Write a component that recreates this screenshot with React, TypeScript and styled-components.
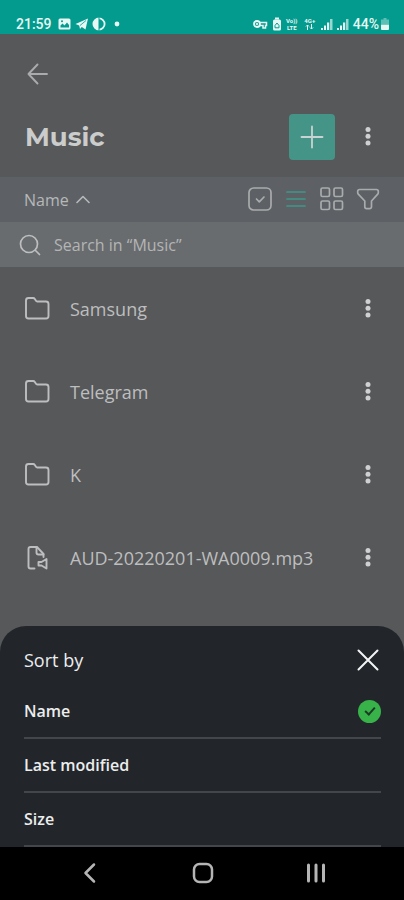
import React, { useState } from "react";
import styled, { createGlobalStyle } from "styled-components";

const GlobalStyle = createGlobalStyle`
  *, *::before, *::after { box-sizing: border-box; }
  body { margin: 0; background: #57585a; }
  button, input { font: inherit; color: inherit; }
`;

const Screen = styled.div`
  display: flex;
  flex-direction: column;
  min-height: 100vh;
  background: #57585a;
  color: #bdbebf;
  font-family: "Open Sans", "Noto Sans", sans-serif;
`;

const StatusBar = styled.div`
  display: flex;
  justify-content: space-between;
  align-items: center;
  height: 34px;
  padding: 13px 15px 0 16px;
  background: #029b8e;
  color: #e6f7f4;
  font-family: Roboto, sans-serif;
  font-size: 14px;
  font-weight: 500;
  line-height: 20px;
`;

const StatusGroup = styled.div<{ $gap: number }>`
  display: flex;
  align-items: center;
  gap: ${(p) => p.$gap}px;
`;

const StackedLabel = styled.span`
  display: grid;
  width: 14px;
  font-size: 6px;
  font-weight: 700;
  line-height: 7px;
  justify-items: center;
`;

const Main = styled.main`
  flex: 1;
`;

const IconButton = styled.button<{ $tone?: string }>`
  display: grid;
  place-items: center;
  width: 24px;
  height: 24px;
  padding: 0;
  border: 0;
  background: none;
  color: ${(p) => p.$tone ?? "#a9abac"};
  cursor: pointer;
`;

const BackRow = styled.div`
  display: flex;
  align-items: center;
  height: 80px;
  padding: 0 25px;
`;

const TitleRow = styled.header`
  display: flex;
  align-items: center;
  padding: 0 24px 17px 25px;
`;

const Title = styled.h1`
  flex: 1;
  margin: 0;
  color: #cbcccc;
  font-family: Montserrat, Inter, sans-serif;
  font-size: 26px;
  font-weight: 700;
  line-height: 36px;
`;

const AddButton = styled.button`
  display: grid;
  place-items: center;
  width: 46px;
  height: 46px;
  margin-right: 21px;
  padding: 0;
  border: 0;
  border-radius: 4px;
  background: #459488;
  color: #c9d3d1;
`;

const Toolbar = styled.div`
  display: flex;
  align-items: center;
  justify-content: space-between;
  height: 45px;
  padding: 0 24px 2px;
  background: #5d6165;
`;

const SortButton = styled.button`
  display: flex;
  align-items: center;
  gap: 7px;
  padding: 2px 0 0;
  border: 0;
  background: none;
  color: #b6b8ba;
  font-size: 16px;
  line-height: 24px;
`;

const ToolGroup = styled.div`
  display: flex;
  gap: 12px;
`;

const SearchBox = styled.label`
  display: flex;
  align-items: center;
  gap: 12px;
  height: 45px;
  padding: 0 18px;
  background: #696c6e;
`;

const SearchInput = styled.input`
  flex: 1;
  min-width: 0;
  padding: 0;
  border: 0;
  outline: 0;
  background: none;
  font-size: 16px;
  line-height: 24px;
  &::placeholder {
    color: #b3b5b6;
    opacity: 1;
  }
`;

const FileList = styled.ul`
  margin: 0;
  padding: 0;
  list-style: none;
`;

const FileRow = styled.li`
  display: flex;
  align-items: center;
  height: 83px;
  padding: 0 24px;
`;

const FileName = styled.span`
  flex: 1;
  margin-left: 20px;
  font-size: 18px;
  line-height: 26px;
`;

const Sheet = styled.section`
  padding: 0 23px 0 24px;
  border-radius: 26px 26px 0 0;
  background: #22262b;
  color: #eceded;
`;

const SheetHeader = styled.div`
  display: flex;
  align-items: center;
  justify-content: space-between;
  height: 59px;
  padding-top: 9px;
`;

const SheetTitle = styled.h2`
  margin: 0;
  font-size: 18px;
  font-weight: 400;
  line-height: 26px;
`;

const CloseButton = styled(IconButton)`
  width: 26px;
`;

const SortOption = styled.label`
  display: flex;
  align-items: center;
  justify-content: space-between;
  height: 54px;
  border-bottom: 2px solid #43474b;
  font-size: 16px;
  font-weight: 600;
  line-height: 24px;
  cursor: pointer;
`;

const SortRadio = styled.input`
  display: grid;
  place-items: center;
  appearance: none;
  width: 23px;
  height: 23px;
  margin: 0;
  border-radius: 50%;
  &:checked {
    background: #37b34a;
  }
  &:checked::after {
    content: "";
    width: 6px;
    height: 10px;
    margin-bottom: 3px;
    border: solid #1d3a26;
    border-width: 0 2px 2px 0;
    transform: rotate(42deg);
  }
`;

const NavBar = styled.nav`
  display: flex;
  height: 53px;
  padding: 0 32px 2px 34px;
  background: #000;
`;

const NavButton = styled.button`
  display: grid;
  flex: 1;
  place-items: center;
  padding: 0;
  border: 0;
  background: none;
  color: #b5b5b5;
`;

type IconProps = { size?: number; w?: number; children: React.ReactNode };
const LineIcon = ({ size = 24, w = 2, children }: IconProps) => (
  <svg width={size} height={size} viewBox={`0 0 ${size} ${size}`} fill="none" stroke="currentColor"
    strokeWidth={w} strokeLinecap="round" strokeLinejoin="round" aria-hidden="true">
    {children}
  </svg>
);

const Dots = () => (
  <svg width="24" height="24" viewBox="0 0 24 24" fill="#cfd0d0" aria-hidden="true">
    <circle cx="12" cy="4.500" r="2.500" />
    <circle cx="12" cy="11.200" r="2.500" />
    <circle cx="12" cy="17.900" r="2.500" />
  </svg>
);

const FolderIcon = () => (
  <LineIcon size={26} w={1.9}>
    <path d="M2 20V4.500A2.500 2.500 0 0 1 4.500 2h4.600a2 2 0 0 1 1.700.9l1.200 1.900a1.500 1.500 0 0 0 1.300.7H22A2.500 2.500 0 0 1 24.500 8v12a2.500 2.500 0 0 1-2.500 2.500H4.500A2.500 2.500 0 0 1 2 20z" />
  </LineIcon>
);

const AudioFileIcon = () => (
  <LineIcon size={26} w={1.9}>
    <path d="M10.500 23.500H6.500a2 2 0 0 1-2-2V4a2 2 0 0 1 2-2H13l6.500 7v3" />
    <path d="M12.500 2.500v5a2 2 0 0 0 2 2h5" />
    <path d="M14.500 17h3l5-3v9.500l-5-3h-3z" />
  </LineIcon>
);

const Signal = ({ level }: { level: number }) => (
  <svg width="12" height="12" viewBox="0 0 12 12" fill="currentColor" aria-hidden="true">
    <rect x="0" y="10" width="2" height="2" />
    <rect x="3" y="7.500" width="2" height="4.500" />
    <rect x="6" y="4.500" width="2.200" height="7.500" />
    <rect x="9" y="1" width="2.500" height="11" opacity={level} />
  </svg>
);

const files = [
  { name: "Samsung", audio: false },
  { name: "Telegram", audio: false },
  { name: "K", audio: false },
  { name: "AUD-20220201-WA0009.mp3", audio: true },
];

const sortOptions = ["Name", "Last modified", "Size"];

export default function App() {
  const [sort, setSort] = useState("Name");
  return (
    <Screen>
      <GlobalStyle />
      <StatusBar>
        <StatusGroup $gap={5}>
          <span>21:59</span>
          <svg width="64" height="14" viewBox="0 0 64 14" fill="currentColor" aria-hidden="true">
            <rect x="1.500" y="1.500" width="12" height="11" rx="1.500" />
            <path d="M3.500 10.500V8.500l2-2 2 2 2.500-3 2 2.500v2.500z" fill="#029b8e" />
            <circle cx="5" cy="4.300" r="1" fill="#029b8e" />
            <path d="M31 1.500 28.500 12.500l-3.700-2.500-1.800 2-.8-3.500L18.500 7z" />
            <path d="m29 3.500-6 5" stroke="#029b8e" strokeWidth=".8" />
            <circle cx="42" cy="7" r="5.600" fill="none" stroke="currentColor" strokeWidth="1.800" />
            <path d="M42 1.400a5.600 5.600 0 0 0 0 11.200z" />
            <path d="M42 0v14" stroke="#029b8e" strokeWidth="1" />
            <circle cx="60" cy="7" r="2.400" />
          </svg>
        </StatusGroup>
        <StatusGroup $gap={4}>
          <svg width="28" height="14" viewBox="0 0 28 14" fill="none" stroke="currentColor" aria-hidden="true">
            <circle cx="4" cy="7" r="3" strokeWidth="1.800" />
            <circle cx="4" cy="7" r=".8" fill="currentColor" />
            <path d="M7 5.500h6.500v3h-1V11h-2.500V8.500H7" strokeWidth="1.500" />
            <rect x="20" y="2.500" width="8" height="11" rx="1.500" fill="currentColor" stroke="none" />
            <path d="M22 1.500h4" strokeWidth="2" />
            <path d="m22 8.500 2-2.500 2 2.500v2.300h-4z" stroke="#029b8e" />
          </svg>
          <StackedLabel><span>Vo))</span><span>LTE</span></StackedLabel>
          <StackedLabel>
            <span>4G+</span>
            <svg width="9" height="6" viewBox="0 0 9 6" fill="none" stroke="currentColor" aria-hidden="true">
              <path d="M2.500 6V1M1 2.500 2.500 1 4 2.500M6.500 0v5M5 3.500 6.500 5 8 3.500" />
            </svg>
          </StackedLabel>
          <Signal level={0.65} />
          <Signal level={0.65} />
          <StatusGroup $gap={2}>
            <span>44%</span>
            <svg width="8" height="12" viewBox="0 0 8 12" fill="currentColor" aria-hidden="true">
              <path d="M2.500 0h3v1.500H8V6H0V1.500h2.500z" opacity=".4" />
              <path d="M0 6.500h8V11a1 1 0 0 1-1 1H1a1 1 0 0 1-1-1z" />
            </svg>
          </StatusGroup>
        </StatusGroup>
      </StatusBar>

      <Main>
        <BackRow>
          <IconButton aria-label="Back">
            <LineIcon w={1.900}><path d="M22 12H3.500M12.500 2.500 3.500 12l9 9.500" /></LineIcon>
          </IconButton>
        </BackRow>
        <TitleRow>
          <Title>Music</Title>
          <AddButton aria-label="Add">
            <LineIcon w={1.800}><path d="M12 1.500v21M1.500 12h21" /></LineIcon>
          </AddButton>
          <IconButton aria-label="More options"><Dots /></IconButton>
        </TitleRow>

        <Toolbar>
          <SortButton>
            Name
            <LineIcon size={14} w={1.600}><path d="M1 9.500 7 3.500l6 6" /></LineIcon>
          </SortButton>
          <ToolGroup>
            <IconButton aria-label="Select">
              <LineIcon w={1.700}>
                <rect x="1" y="1" width="22" height="22" rx="4.500" />
                <path d="m8.500 12 2.800 2.800L16 10" />
              </LineIcon>
            </IconButton>
            <IconButton aria-label="List view" $tone="#3d988b">
              <LineIcon w={1.700}><path d="M3 5h18M3 12h18M3 19h18" /></LineIcon>
            </IconButton>
            <IconButton aria-label="Grid view">
              <LineIcon w={1.700}>
                <rect x="1" y="1" width="8.500" height="8.500" rx="1.500" />
                <rect x="14" y="1" width="8.500" height="8.500" rx="1.500" />
                <rect x="1" y="14" width="8.500" height="8.500" rx="1.500" />
                <rect x="14" y="14" width="8.500" height="8.500" rx="1.500" />
              </LineIcon>
            </IconButton>
            <IconButton aria-label="Filter">
              <LineIcon w={1.700}>
                <path d="M3.500 2.500h17a1.800 1.800 0 0 1 1.800 2v.9a3 3 0 0 1-.8 2L15.500 14v5.800a1.800 1.800 0 0 1-1.800 1.800h-3.100a1.800 1.800 0 0 1-1.800-1.800V14L2.500 7.400a3 3 0 0 1-.8-2v-.9a1.800 1.800 0 0 1 1.800-2z" />
              </LineIcon>
            </IconButton>
          </ToolGroup>
        </Toolbar>

        <SearchBox>
          <LineIcon w={1.700}><circle cx="11" cy="11" r="8.500" /><path d="m17.500 17.500 4 4" /></LineIcon>
          <SearchInput type="search" aria-label="Search" placeholder="Search in “Music”" />
        </SearchBox>

        <FileList>
          {files.map((f) => (
            <FileRow key={f.name}>
              {f.audio ? <AudioFileIcon /> : <FolderIcon />}
              <FileName>{f.name}</FileName>
              <IconButton aria-label={`Options for ${f.name}`}><Dots /></IconButton>
            </FileRow>
          ))}
        </FileList>
      </Main>

      <Sheet role="dialog" aria-labelledby="sort-title">
        <SheetHeader>
          <SheetTitle id="sort-title">Sort by</SheetTitle>
          <CloseButton aria-label="Close" $tone="#f4f4f4">
            <LineIcon w={2}><path d="m2.500 2.500 19 19M21.500 2.500l-19 19" /></LineIcon>
          </CloseButton>
        </SheetHeader>
        {sortOptions.map((option) => (
          <SortOption key={option}>
            {option}
            <SortRadio type="radio" name="sort" checked={sort === option} onChange={() => setSort(option)} />
          </SortOption>
        ))}
      </Sheet>

      <NavBar aria-label="System">
        <NavButton aria-label="Back">
          <LineIcon w={2.500}><path d="M16 3.500 7.500 12l8.500 8.500" /></LineIcon>
        </NavButton>
        <NavButton aria-label="Home">
          <LineIcon w={2.500}><rect x="3" y="3" width="18" height="18" rx="5.500" /></LineIcon>
        </NavButton>
        <NavButton aria-label="Recent apps">
          <LineIcon w={3}><path d="M4.500 4v16M12 4v16M19.500 4v16" /></LineIcon>
        </NavButton>
      </NavBar>
    </Screen>
  );
}
